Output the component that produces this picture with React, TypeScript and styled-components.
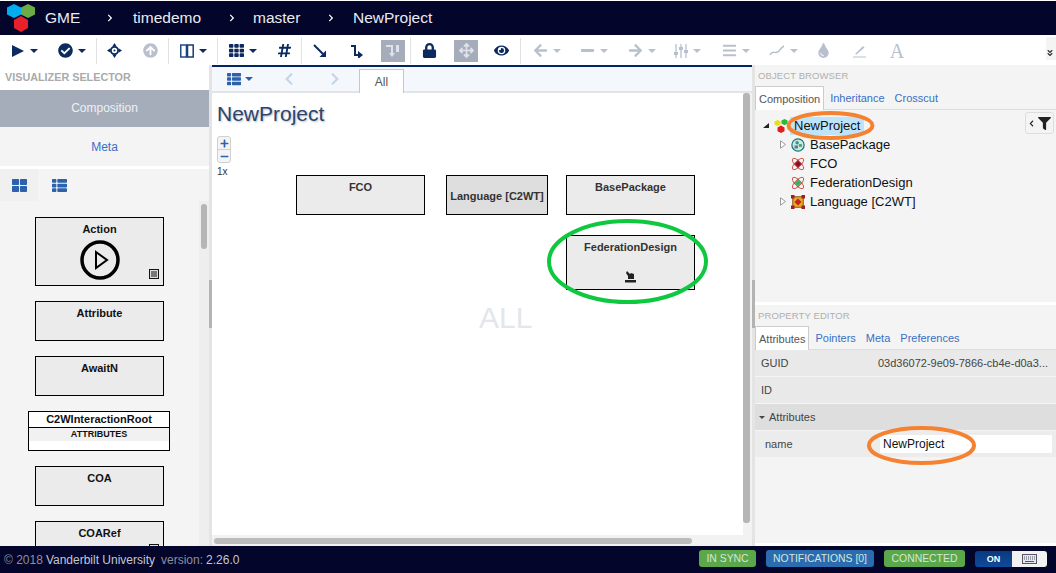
import React from 'react';
import styled, { createGlobalStyle } from 'styled-components';
import {
  FaAngleDoubleDown,
  FaArrowCircleUp,
  FaArrowLeft,
  FaArrowRight,
  FaArrowsAlt,
  FaBars,
  FaCheckCircle,
  FaChevronLeft,
  FaChevronRight,
  FaEye,
  FaFilter,
  FaHashtag,
  FaLock,
  FaMinus,
  FaPlus,
  FaTh,
  FaThLarge,
  FaThList,
  FaTint,
} from 'react-icons/fa';

const navy = '#03052a';
const iconBlue = '#0b2a60';
const linkBlue = '#3a6fc4';
const disabled = '#b8c0ce';

const GlobalStyle = createGlobalStyle`
  html, body {
    margin: 0;
    padding: 0;
    height: 100%;
    overflow: hidden;
    font-family: "Liberation Sans", Arial, sans-serif;
    background: #fff;
  }
`;

const Page = styled.div`
  position: relative;
  width: 1056px;
  height: 573px;
  display: flex;
  flex-direction: column;
  overflow: hidden;
`;

const NavBar = styled.div`
  height: 34px;
  margin-top: 1px;
  flex: none;
  display: flex;
  align-items: center;
  background: ${navy};
  color: #e9ebf2;
  font-size: 15.5px;
`;

const Logo = styled.svg`
  width: 30px;
  height: 32px;
  margin: 0 9px 0 6px;
  flex: none;
`;

const Crumb = styled.span<{ $w: number }>`
  width: ${(p) => p.$w}px;
  flex: none;
`;

const CrumbSep = styled.span<{ $w: number }>`
  width: ${(p) => p.$w}px;
  flex: none;
  display: flex;
  align-items: center;
  color: #fff;
  font-size: 8px;
`;

const Toolbar = styled.div`
  height: 30px;
  box-sizing: border-box;
  padding-top: 1px;
  flex: none;
  display: flex;
  align-items: center;
  background: #fff;
  position: relative;
`;

const ToolSlot = styled.div<{ $w: number; $color: string }>`
  width: ${(p) => p.$w}px;
  height: 22px;
  flex: none;
  display: flex;
  align-items: center;
  justify-content: center;
  gap: 5px;
  color: ${(p) => p.$color};
  font-size: 15px;
`;

const ActiveSlot = styled.div<{ $left: number; $right: number }>`
  width: 24px;
  height: 22px;
  margin-left: ${(p) => p.$left}px;
  margin-right: ${(p) => p.$right}px;
  flex: none;
  display: flex;
  align-items: center;
  justify-content: center;
  background: #a6adba;
  color: #dfe3e9;
  font-size: 15px;
`;

const Caret = styled.span<{ $s?: number }>`
  width: 0;
  height: 0;
  flex: none;
  border-left: ${(p) => p.$s || 4}px solid transparent;
  border-right: ${(p) => p.$s || 4}px solid transparent;
  border-top: ${(p) => p.$s || 4}px solid currentColor;
`;

const ToolSep = styled.div`
  width: 1px;
  height: 26px;
  flex: none;
  background: #e2e2e2;
`;

const SerifA = styled.span`
  font-family: "Liberation Serif", serif;
  font-size: 20px;
  line-height: 1;
`;

const OverflowToggle = styled.div`
  position: absolute;
  right: 0;
  top: 2px;
  width: 10px;
  height: 23px;
  background: #f4f4f4;
  display: flex;
  align-items: flex-end;
  justify-content: flex-start;
  padding-bottom: 3px;
  box-sizing: border-box;
  color: #333;
  font-size: 8px;
`;

const Main = styled.div`
  flex: 1;
  min-height: 0;
  display: flex;
`;

const LeftPanel = styled.div`
  width: 209px;
  flex: none;
  display: flex;
  flex-direction: column;
  background: #f4f4f4;
  overflow: hidden;
`;

const PanelTitle = styled.div`
  height: 25px;
  box-sizing: border-box;
  padding: 0 0 2px 5px;
  flex: none;
  display: flex;
  align-items: center;
  background: #fff;
  color: #aaa;
  font-size: 10.8px;
  font-weight: bold;
`;

const VizItem = styled.div<{ $active?: boolean; $h: number }>`
  height: ${(p) => p.$h}px;
  box-sizing: border-box;
  padding-bottom: ${(p) => (p.$active ? 1 : 0)}px;
  flex: none;
  display: flex;
  align-items: center;
  justify-content: center;
  font-size: 12px;
  background: ${(p) => (p.$active ? '#a6adba' : '#f4f4f4')};
  color: ${(p) => (p.$active ? '#eef0f3' : linkBlue)};
`;

const PaletteTabs = styled.div`
  height: 35px;
  box-sizing: border-box;
  flex: none;
  display: flex;
  border-top: 3px solid #fff;
`;

const PaletteTab = styled.div<{ $active?: boolean }>`
  width: 38px;
  margin-right: ${(p) => (p.$active ? 2 : 0)}px;
  display: flex;
  align-items: center;
  justify-content: center;
  color: #2c62ad;
  font-size: 15px;
  background: ${(p) => (p.$active ? '#f0f0f0' : 'transparent')};
`;

const PaletteBody = styled.div`
  flex: 1;
  min-height: 0;
  position: relative;
  overflow: hidden;
`;

const PaletteList = styled.div`
  padding-top: 16px;
  width: 199px;
  display: flex;
  flex-direction: column;
  align-items: center;
  gap: 15px;
`;

const PaletteItem = styled.div<{ $h: number }>`
  position: relative;
  width: 129px;
  height: ${(p) => p.$h}px;
  flex: none;
  box-sizing: border-box;
  border: 1px solid #000;
  background: #ebebeb;
  color: #111;
  font-size: 11px;
  font-weight: bold;
  text-align: center;
  padding-top: 5px;
  line-height: 13px;
`;

const ActionGlyph = styled.svg`
  display: block;
  margin: 4px auto 0;
  width: 40px;
  height: 40px;
`;

const MetaBadge = styled.svg`
  position: absolute;
  right: 4px;
  bottom: 6px;
  width: 10px;
  height: 10px;
`;

const ClassBox = styled.div`
  width: 142px;
  height: 40px;
  margin-left: -1px;
  flex: none;
  box-sizing: border-box;
  border: 1px solid #000;
  background: #fff;
  text-align: center;
  color: #111;
  font-weight: bold;
`;

const ClassName = styled.div`
  height: 15px;
  border-bottom: 1px solid #000;
  font-size: 11px;
  line-height: 15px;
`;

const ClassAttrs = styled.div`
  height: 13px;
  background: #f1f1f1;
  font-size: 9px;
  line-height: 12px;
`;

const ScrollTrack = styled.div`
  position: absolute;
  top: 0;
  right: 0;
  bottom: 0;
  width: 10px;
  background: #eee;
`;

const ScrollThumb = styled.div`
  margin: 3px 2px 0 2px;
  width: 6px;
  height: 45px;
  border-radius: 3px;
  background: #b5b5b5;
`;

const Splitter = styled.div`
  width: 3px;
  flex: none;
  position: relative;
  background: #e4e4e4;
`;

const SplitterGrip = styled.div`
  position: absolute;
  left: 0;
  right: 0;
  top: 215px;
  height: 48px;
  background: #b3b3b3;
`;

const Center = styled.div`
  width: 540px;
  flex: none;
  display: flex;
  flex-direction: column;
  background: #fff;
`;

const CenterBar = styled.div`
  height: 28px;
  box-sizing: border-box;
  flex: none;
  display: flex;
  align-items: flex-end;
  background: #f4f8fd;
  border-top: 2px solid #032561;
  border-bottom: 2px solid #e2e4e8;
`;

const BarButton = styled.div<{ $w: number; $color: string }>`
  width: ${(p) => p.$w}px;
  height: 24px;
  flex: none;
  display: flex;
  align-items: center;
  justify-content: center;
  gap: 4px;
  color: ${(p) => p.$color};
  font-size: 14px;
`;

const SheetTab = styled.div`
  width: 43px;
  height: 23px;
  margin-bottom: -2px;
  flex: none;
  display: flex;
  align-items: center;
  justify-content: center;
  background: #fff;
  border: 1px solid #c4c8cc;
  border-bottom: none;
  color: #555;
  font-size: 12px;
`;

const CanvasWrap = styled.div`
  flex: 1;
  min-height: 0;
  display: flex;
`;

const CanvasColumn = styled.div`
  flex: 1;
  min-width: 0;
  display: flex;
  flex-direction: column;
`;

const Canvas = styled.div`
  flex: 1;
  min-height: 0;
  position: relative;
  overflow: hidden;
  padding: 9px 0 0 5px;
`;

const ModelTitle = styled.div`
  color: #2b4470;
  font-size: 21px;
  line-height: 24px;
  text-shadow: 1px 1px 2px #bbb;
`;

const ZoomGroup = styled.div`
  margin-top: 10px;
  width: 14px;
  height: 27px;
  box-sizing: border-box;
  display: flex;
  flex-direction: column;
  border: 1px solid #d0d0d0;
  border-radius: 3px;
  background: #f4f4f4;
`;

const ZoomButton = styled.div`
  flex: 1;
  display: flex;
  align-items: center;
  justify-content: center;
  color: #2c62ad;
  font-size: 9px;
  & + & {
    border-top: 1px solid #d0d0d0;
  }
`;

const ZoomLabel = styled.div`
  margin-top: 3px;
  font-size: 10px;
  line-height: 12px;
  color: #333;
`;

const Node = styled.div<{ $x: number; $y: number; $w: number; $h: number; $dark?: boolean }>`
  position: absolute;
  left: ${(p) => p.$x}px;
  top: ${(p) => p.$y}px;
  width: ${(p) => p.$w}px;
  height: ${(p) => p.$h}px;
  box-sizing: border-box;
  border: 1px solid #000;
  background: ${(p) => (p.$dark ? '#dedede' : '#ebebeb')};
  color: #333;
  font-size: 11px;
  font-weight: bold;
  text-align: center;
  line-height: 13px;
  padding-top: ${(p) => (p.$dark ? 14 : 5)}px;
  white-space: nowrap;
`;

const NodeGlyph = styled.svg`
  position: absolute;
  left: 57px;
  bottom: 6px;
  width: 13px;
  height: 13px;
`;

const Watermark = styled.div`
  position: absolute;
  left: 267px;
  top: 207px;
  color: #e3e6ea;
  font-size: 30px;
  line-height: 35px;
`;

const VScroll = styled.div`
  width: 9px;
  flex: none;
  background: #f2f2f2;
  display: flex;
  flex-direction: column;
`;

const VThumb = styled.div`
  height: 430px;
  width: 7px;
  background: #b5b5b5;
  border-radius: 3px;
`;

const HScroll = styled.div`
  height: 11px;
  flex: none;
  background: #f2f2f2;
  display: flex;
  align-items: center;
  padding-left: 2px;
`;

const HThumb = styled.div`
  width: 478px;
  height: 6px;
  border-radius: 3px;
  background: #bcbcbc;
`;

const RightPanel = styled.div`
  flex: 1;
  min-width: 0;
  display: flex;
  flex-direction: column;
  background: #f4f4f4;
  border-bottom: 3px solid #fff;
`;

const BrowserPane = styled.div`
  height: 240px;
  box-sizing: border-box;
  flex: none;
  position: relative;
  border-bottom: 3px solid #fff;
`;

const PaneTitle = styled.div`
  height: 21px;
  padding-left: 3px;
  display: flex;
  align-items: center;
  color: #b0b0b0;
  font-size: 9.5px;
  letter-spacing: 0.1px;
`;

const TabRow = styled.div`
  height: 24px;
  box-sizing: border-box;
  display: flex;
  align-items: stretch;
  border-bottom: 1px solid #ddd;
`;

const TabItem = styled.div<{ $active?: boolean }>`
  display: flex;
  align-items: center;
  padding: 0 ${(p) => (p.$active ? 3 : 0)}px;
  margin-right: ${(p) => (p.$active ? 6 : 10)}px;
  font-size: 11px;
  height: ${(p) => (p.$active ? 24 : 23)}px;
  box-sizing: border-box;
  color: ${(p) => (p.$active ? '#555' : linkBlue)};
  background: ${(p) => (p.$active ? '#fff' : 'transparent')};
  border: ${(p) => (p.$active ? '1px solid #ccc' : 'none')};
  border-bottom: none;
`;

const Tree = styled.div`
  padding-top: 6px;
`;

const TreeRow = styled.div<{ $depth: number; $leaf?: boolean }>`
  height: 19px;
  display: flex;
  align-items: center;
  padding-left: ${(p) => 8 + p.$depth * 17 + (p.$leaf ? 11 : 0)}px;
  font-size: 13px;
  color: #111;
`;

const Expander = styled.svg`
  width: 6px;
  height: 9px;
  flex: none;
  margin-right: 5px;
`;

const TreeIcon = styled.svg`
  width: 14px;
  height: 14px;
  flex: none;
  margin-right: 3px;
`;

const TreeLabel = styled.span<{ $selected?: boolean }>`
  padding: 0 ${(p) => (p.$selected ? 4 : 2)}px;
  margin-left: ${(p) => (p.$selected ? -1 : 0)}px;
  line-height: 18px;
  background: ${(p) => (p.$selected ? '#bde4fb' : 'transparent')};
`;

const FilterButton = styled.div`
  position: absolute;
  right: 2px;
  top: 47px;
  width: 29px;
  height: 22px;
  box-sizing: border-box;
  border: 1px solid #ddd;
  border-radius: 3px;
  background: #f4f4f4;
  display: flex;
  align-items: center;
  justify-content: center;
  gap: 3px;
  color: #222;
  font-size: 13px;
`;

const PropRow = styled.div<{ $tone: 'light' | 'dark' }>`
  height: 26px;
  margin-bottom: 1px;
  display: flex;
  align-items: center;
  font-size: 11px;
  color: #444;
  background: ${(p) => (p.$tone === 'dark' ? '#dedede' : '#e9e9e9')};
`;

const PropName = styled.div`
  width: 117px;
  flex: none;
  padding-left: 6px;
`;

const PropValue = styled.div`
  flex: 1;
  white-space: nowrap;
`;

const SectionName = styled.div`
  display: flex;
  align-items: center;
  gap: 4px;
  padding-left: 4px;
`;

const NameRow = styled.div`
  height: 26px;
  display: flex;
  align-items: center;
  font-size: 11px;
  color: #444;
  background: #ececec;
`;

const NameLabel = styled.div`
  width: 115px;
  padding-left: 10px;
  flex: none;
`;

const NameInput = styled.div`
  width: 169px;
  height: 18px;
  flex: none;
  padding-left: 3px;
  display: flex;
  align-items: center;
  background: #fff;
  color: #111;
  font-size: 12px;
`;

const Footer = styled.div`
  height: 27px;
  flex: none;
  display: flex;
  align-items: center;
  background: ${navy};
  font-size: 12px;
  padding-left: 4px;
`;

const FooterText = styled.span<{ $color: string; $gap?: number }>`
  color: ${(p) => p.$color};
  margin-right: ${(p) => p.$gap || 0}px;
`;

const Badges = styled.div`
  margin-left: auto;
  display: flex;
  align-items: flex-start;
  gap: 10px;
  padding: 0 9px 2px 0;
`;

const Badge = styled.div<{ $bg: string; $w: number }>`
  width: ${(p) => p.$w}px;
  height: 17px;
  display: flex;
  align-items: center;
  justify-content: center;
  border-radius: 3px;
  background: ${(p) => p.$bg};
  color: #d8e6d8;
  font-size: 10.4px;
`;

const Switch = styled.div`
  width: 72px;
  height: 16px;
  margin-top: 1px;
  display: flex;
  border-radius: 3px;
  overflow: hidden;
`;

const SwitchOn = styled.div`
  width: 37px;
  display: flex;
  align-items: center;
  justify-content: center;
  background: linear-gradient(#0a3a80, #0f4a9a);
  color: #fff;
  font-size: 9px;
  font-weight: bold;
`;

const SwitchOff = styled.div`
  flex: 1;
  display: flex;
  align-items: center;
  justify-content: center;
  background: #f2f2f2;
`;

const Annotations = styled.svg`
  position: absolute;
  left: 0;
  top: 0;
  width: 1056px;
  height: 573px;
  pointer-events: none;
`;

const Target = () => (
  <svg width="15" height="15" viewBox="0 0 15 15">
    <circle cx="7.5" cy="7.5" r="3.6" fill="none" stroke="currentColor" strokeWidth="1.8" />
    <path d="M7.5 0l2.2 3.4H5.3zM7.5 15l-2.2-3.4h4.4zM0 7.5l3.4-2.2v4.4zM15 7.5l-3.4 2.2V5.3z" fill="currentColor" />
    <circle cx="7.5" cy="7.5" r="1" fill="currentColor" />
  </svg>
);

const ArrowSE = () => (
  <svg width="14" height="14" viewBox="0 0 14 14">
    <path d="M1 1l9 9" stroke="currentColor" strokeWidth="2" fill="none" />
    <path d="M13 13H6.5L13 6.5z" fill="currentColor" />
  </svg>
);

const StepArrow = () => (
  <svg width="14" height="14" viewBox="0 0 14 14">
    <path d="M1 2h4v9h4" stroke="currentColor" strokeWidth="2" fill="none" />
    <path d="M8 7l5 4-5 4z" fill="currentColor" />
  </svg>
);

const StepBox = () => (
  <svg width="14" height="14" viewBox="0 0 14 14">
    <path d="M0 2h6v8" stroke="currentColor" strokeWidth="2" fill="none" />
    <path d="M3 9l3 4 3-4z" fill="currentColor" />
    <path d="M10 1h3v7h-3z" fill="currentColor" />
  </svg>
);

const Columns = () => (
  <svg width="14" height="14" viewBox="0 0 14 14">
    <rect x="0.75" y="1" width="5.7" height="12" fill="#fff" stroke="#1d4a8c" strokeWidth="1.5" />
    <rect x="7.5" y="1" width="5.7" height="12" fill="#fff" stroke="#1d3a6c" strokeWidth="1.5" />
  </svg>
);

const Curve = () => (
  <svg width="16" height="12" viewBox="0 0 16 12">
    <path d="M1 10c3-6 6 0 9-4s3-4 5-5" stroke="currentColor" strokeWidth="1.4" fill="none" />
  </svg>
);

const Pencil = () => (
  <svg width="14" height="14" viewBox="0 0 14 14">
    <path d="M2 10l8-8 1.5 1.5-8 7z" fill="currentColor" />
    <path d="M0 13h13" stroke="currentColor" />
  </svg>
);

const Sliders = () => (
  <svg width="14" height="14" viewBox="0 0 14 14">
    <path d="M2 0v14M7 0v14M12 0v14" stroke="currentColor" strokeWidth="1.3" />
    <path d="M0 8h4v3H0zM5 3h4v3H5zM10 6h4v3h-4z" fill="currentColor" />
  </svg>
);

const KeyboardGlyph = () => (
  <svg width="15" height="10" viewBox="0 0 15 10">
    <rect x="0.5" y="0.5" width="14" height="9" fill="#e6e8f0" stroke="#556" />
    <path d="M2 3h11M2 5h11" stroke="#556" strokeDasharray="1 1" />
    <path d="M3 7.5h9" stroke="#556" />
  </svg>
);

const ExpandClosed = () => (
  <Expander viewBox="0 0 6 9">
    <path d="M.5.8l5 3.7-5 3.7z" fill="#fff" stroke="#999" />
  </Expander>
);

const ExpandOpen = () => (
  <Expander viewBox="0 0 6 9">
    <path d="M6 2v5H0z" fill="#222" />
  </Expander>
);

const ProjectIcon = () => (
  <TreeIcon viewBox="0 0 16 16">
    <path d="M4 1l3.5 1.8v3.4L4 8 .5 6.2V2.8z" fill="#e6e010" />
    <path d="M12 0l3.5 1.8v3.4L12 7 8.5 5.2V1.8z" fill="#2db83a" />
    <path d="M8 7.5l4 2.1v4.3L8 16l-4-2.1V9.6z" fill="#e01c1c" />
  </TreeIcon>
);

const PackageIcon = () => (
  <TreeIcon viewBox="0 0 16 16">
    <circle cx="8" cy="8" r="7" fill="#cfe8e4" stroke="#0f7a70" strokeWidth="1.4" />
    <circle cx="7" cy="5.5" r="2" fill="#3f8f88" />
    <rect x="4" y="8.5" width="4" height="3.5" fill="#5a7f9a" />
    <rect x="9" y="7" width="3.5" height="3" fill="#4a9f70" />
  </TreeIcon>
);

const AtomIcon: React.FC<{ core: string }> = ({ core }) => (
  <TreeIcon viewBox="0 0 16 16">
    <ellipse cx="8" cy="8" rx="8.5" ry="3.4" transform="rotate(45 8 8)" fill="none" stroke="#c8443c" />
    <ellipse cx="8" cy="8" rx="8.5" ry="3.4" transform="rotate(-45 8 8)" fill="none" stroke="#c8443c" />
    <path d="M8 4l4 4-4 4-4-4z" fill={core} />
  </TreeIcon>
);

const LanguageIcon = () => (
  <TreeIcon viewBox="0 0 16 16">
    <rect x="2" y="2" width="12" height="12" fill="#e8a820" stroke="#7a4a10" />
    <path d="M8 4l4 4-4 4-4-4z" fill="#c82020" />
    <rect x="0" y="0" width="4" height="4" fill="#a02020" />
    <rect x="12" y="0" width="4" height="4" fill="#a02020" />
    <rect x="0" y="12" width="4" height="4" fill="#a02020" />
    <rect x="12" y="12" width="4" height="4" fill="#a02020" />
  </TreeIcon>
);

const App: React.FC = () => (
  <Page>
    <GlobalStyle />
    <NavBar>
      <Logo viewBox="0 0 30 32">
        <path d="M8 2l7 3.5v7L8 16l-7-3.5v-7z" fill="#00aef0" />
        <path d="M22 2l7 3.5v7L22 16l-7-3.5v-7z" fill="#6bab48" />
        <path d="M15 14l7 4v8l-7 4-7-4v-8z" fill="#e8202c" />
      </Logo>
      <Crumb $w={61}>GME</Crumb>
      <CrumbSep $w={27}>
        <FaChevronRight />
      </CrumbSep>
      <Crumb $w={95}>timedemo</Crumb>
      <CrumbSep $w={25}>
        <FaChevronRight />
      </CrumbSep>
      <Crumb $w={74}>master</Crumb>
      <CrumbSep $w={26}>
        <FaChevronRight />
      </CrumbSep>
      <Crumb $w={90}>NewProject</Crumb>
    </NavBar>

    <Toolbar>
      <ToolSlot $w={48} $color={iconBlue}>
        <svg width="14" height="14" viewBox="0 0 14 14">
          <path d="M1 1l12 6-12 6z" fill="currentColor" />
        </svg>
        <Caret />
      </ToolSlot>
      <ToolSlot $w={48} $color={iconBlue}>
        <FaCheckCircle />
        <Caret />
      </ToolSlot>
      <ToolSep />
      <ToolSlot $w={35} $color={iconBlue}>
        <Target />
      </ToolSlot>
      <ToolSlot $w={36} $color={disabled}>
        <FaArrowCircleUp />
      </ToolSlot>
      <ToolSep />
      <ToolSlot $w={48} $color={iconBlue}>
        <Columns />
        <Caret />
      </ToolSlot>
      <ToolSep />
      <ToolSlot $w={50} $color={iconBlue}>
        <FaTh />
        <Caret />
      </ToolSlot>
      <ToolSlot $w={33} $color={iconBlue}>
        <FaHashtag />
      </ToolSlot>
      <ToolSep />
      <ToolSlot $w={36} $color={iconBlue}>
        <ArrowSE />
      </ToolSlot>
      <ToolSlot $w={38} $color={iconBlue}>
        <StepArrow />
      </ToolSlot>
      <ActiveSlot $left={5} $right={5}>
        <StepBox />
      </ActiveSlot>
      <ToolSep />
      <ToolSlot $w={36} $color={iconBlue}>
        <FaLock />
      </ToolSlot>
      <ActiveSlot $left={7} $right={4}>
        <FaArrowsAlt />
      </ActiveSlot>
      <ToolSlot $w={38} $color={iconBlue}>
        <FaEye />
      </ToolSlot>
      <ToolSep />
      <ToolSlot $w={52} $color={disabled}>
        <FaArrowLeft />
        <Caret />
      </ToolSlot>
      <ToolSlot $w={42} $color={disabled}>
        <FaMinus />
        <Caret />
      </ToolSlot>
      <ToolSlot $w={53} $color={disabled}>
        <FaArrowRight />
        <Caret />
      </ToolSlot>
      <ToolSlot $w={39} $color={disabled}>
        <Sliders />
        <Caret />
      </ToolSlot>
      <ToolSlot $w={57} $color={disabled}>
        <FaBars />
        <Caret />
      </ToolSlot>
      <ToolSlot $w={39} $color={disabled}>
        <Curve />
        <Caret />
      </ToolSlot>
      <ToolSlot $w={41} $color={disabled}>
        <FaTint />
      </ToolSlot>
      <ToolSlot $w={32} $color={disabled}>
        <Pencil />
      </ToolSlot>
      <ToolSlot $w={42} $color={disabled}>
        <SerifA>A</SerifA>
      </ToolSlot>
      <OverflowToggle>
        <FaAngleDoubleDown />
      </OverflowToggle>
    </Toolbar>

    <Main>
      <LeftPanel>
        <PanelTitle>VISUALIZER SELECTOR</PanelTitle>
        <VizItem $active $h={37}>
          Composition
        </VizItem>
        <VizItem $h={39}>Meta</VizItem>
        <PaletteTabs>
          <PaletteTab $active>
            <FaThLarge />
          </PaletteTab>
          <PaletteTab>
            <FaThList />
          </PaletteTab>
        </PaletteTabs>
        <PaletteBody>
          <PaletteList>
            <PaletteItem $h={69}>
              Action
              <ActionGlyph viewBox="0 0 40 40">
                <circle cx="20" cy="20" r="18" fill="none" stroke="#000" strokeWidth="3.5" />
                <path d="M16 12l11 8-11 8z" fill="none" stroke="#000" strokeWidth="2" />
              </ActionGlyph>
              <MetaBadge viewBox="0 0 10 10">
                <rect x="0.5" y="0.5" width="9" height="9" fill="#ddd" stroke="#111" />
                <path d="M2 3h6M2 5h6M2 7h6" stroke="#111" />
              </MetaBadge>
            </PaletteItem>
            <PaletteItem $h={40}>Attribute</PaletteItem>
            <PaletteItem $h={40}>AwaitN</PaletteItem>
            <ClassBox>
              <ClassName>C2WInteractionRoot</ClassName>
              <ClassAttrs>ATTRIBUTES</ClassAttrs>
            </ClassBox>
            <PaletteItem $h={40}>COA</PaletteItem>
            <PaletteItem $h={40}>
              COARef
              <MetaBadge viewBox="0 0 10 10">
                <rect x="0.5" y="0.5" width="9" height="9" fill="#ddd" stroke="#111" />
              </MetaBadge>
            </PaletteItem>
          </PaletteList>
          <ScrollTrack>
            <ScrollThumb />
          </ScrollTrack>
        </PaletteBody>
      </LeftPanel>

      <Splitter>
        <SplitterGrip />
      </Splitter>

      <Center>
        <CenterBar>
          <BarButton $w={56} $color="#2c62ad">
            <FaThList />
            <Caret />
          </BarButton>
          <BarButton $w={42} $color="#c6d4ea">
            <FaChevronLeft />
          </BarButton>
          <BarButton $w={49} $color="#c6d4ea">
            <FaChevronRight />
          </BarButton>
          <SheetTab>All</SheetTab>
        </CenterBar>
        <CanvasWrap>
          <CanvasColumn>
            <Canvas>
              <ModelTitle>NewProject</ModelTitle>
              <ZoomGroup>
                <ZoomButton>
                  <FaPlus />
                </ZoomButton>
                <ZoomButton>
                  <FaMinus />
                </ZoomButton>
              </ZoomGroup>
              <ZoomLabel>1x</ZoomLabel>
              <Node $x={84} $y={82} $w={129} $h={40}>
                FCO
              </Node>
              <Node $x={234} $y={82} $w={102} $h={40} $dark>
                Language [C2WT]
              </Node>
              <Node $x={354} $y={82} $w={129} $h={40}>
                BasePackage
              </Node>
              <Node $x={354} $y={142} $w={129} $h={55}>
                FederationDesign
                <NodeGlyph viewBox="0 0 13 13">
                  <path d="M1 10h11v2.5H1z" fill="#222" />
                  <path d="M3 1l3 3 1-1 3 1v5H4V6L2 3z" fill="#222" />
                </NodeGlyph>
              </Node>
              <Watermark>ALL</Watermark>
            </Canvas>
            <HScroll>
              <HThumb />
            </HScroll>
          </CanvasColumn>
          <VScroll>
            <VThumb />
          </VScroll>
        </CanvasWrap>
      </Center>

      <Splitter>
        <SplitterGrip />
      </Splitter>

      <RightPanel>
        <BrowserPane>
          <PaneTitle>OBJECT BROWSER</PaneTitle>
          <TabRow>
            <TabItem $active>Composition</TabItem>
            <TabItem>Inheritance</TabItem>
            <TabItem>Crosscut</TabItem>
          </TabRow>
          <Tree>
            <TreeRow $depth={0}>
              <ExpandOpen />
              <ProjectIcon />
              <TreeLabel $selected>NewProject</TreeLabel>
            </TreeRow>
            <TreeRow $depth={1}>
              <ExpandClosed />
              <PackageIcon />
              <TreeLabel>BasePackage</TreeLabel>
            </TreeRow>
            <TreeRow $depth={1} $leaf>
              <AtomIcon core="#8a1020" />
              <TreeLabel>FCO</TreeLabel>
            </TreeRow>
            <TreeRow $depth={1} $leaf>
              <AtomIcon core="#3cb060" />
              <TreeLabel>FederationDesign</TreeLabel>
            </TreeRow>
            <TreeRow $depth={1}>
              <ExpandClosed />
              <LanguageIcon />
              <TreeLabel>Language [C2WT]</TreeLabel>
            </TreeRow>
          </Tree>
          <FilterButton>
            <FaChevronLeft size={7} />
            <FaFilter />
          </FilterButton>
        </BrowserPane>
        <PaneTitle>PROPERTY EDITOR</PaneTitle>
        <TabRow>
          <TabItem $active>Attributes</TabItem>
          <TabItem>Pointers</TabItem>
          <TabItem>Meta</TabItem>
          <TabItem>Preferences</TabItem>
        </TabRow>
        <PropRow $tone="light">
          <PropName>GUID</PropName>
          <PropValue>03d36072-9e09-7866-cb4e-d0a3...</PropValue>
        </PropRow>
        <PropRow $tone="light">
          <PropName>ID</PropName>
        </PropRow>
        <PropRow $tone="dark">
          <SectionName>
            <Caret $s={3} />
            Attributes
          </SectionName>
        </PropRow>
        <NameRow>
          <NameLabel>name</NameLabel>
          <NameInput>NewProject</NameInput>
        </NameRow>
      </RightPanel>
    </Main>

    <Footer>
      <FooterText $color="#8a8f9c" $gap={3}>
        © 2018
      </FooterText>
      <FooterText $color="#c3c7d4" $gap={6}>
        Vanderbilt University
      </FooterText>
      <FooterText $color="#8a8f9c" $gap={3}>
        version:
      </FooterText>
      <FooterText $color="#c3c7d4">2.26.0</FooterText>
      <Badges>
        <Badge $bg="#5aa84a" $w={57}>
          IN SYNC
        </Badge>
        <Badge $bg="#2a6cb0" $w={108}>
          NOTIFICATIONS [0]
        </Badge>
        <Badge $bg="#5aa84a" $w={81}>
          CONNECTED
        </Badge>
        <Switch>
          <SwitchOn>ON</SwitchOn>
          <SwitchOff>
            <KeyboardGlyph />
          </SwitchOff>
        </Switch>
      </Badges>
    </Footer>

    <Annotations viewBox="0 0 1056 573">
      <ellipse cx="830.5" cy="125.5" rx="42" ry="12.5" fill="none" stroke="#f58231" strokeWidth="4" />
      <ellipse cx="921.5" cy="445.5" rx="52.5" ry="17.5" fill="none" stroke="#f58231" strokeWidth="4" />
      <ellipse cx="627.5" cy="261.5" rx="78.5" ry="40.5" fill="none" stroke="#10c840" strokeWidth="4" />
    </Annotations>
  </Page>
);

export default App;
